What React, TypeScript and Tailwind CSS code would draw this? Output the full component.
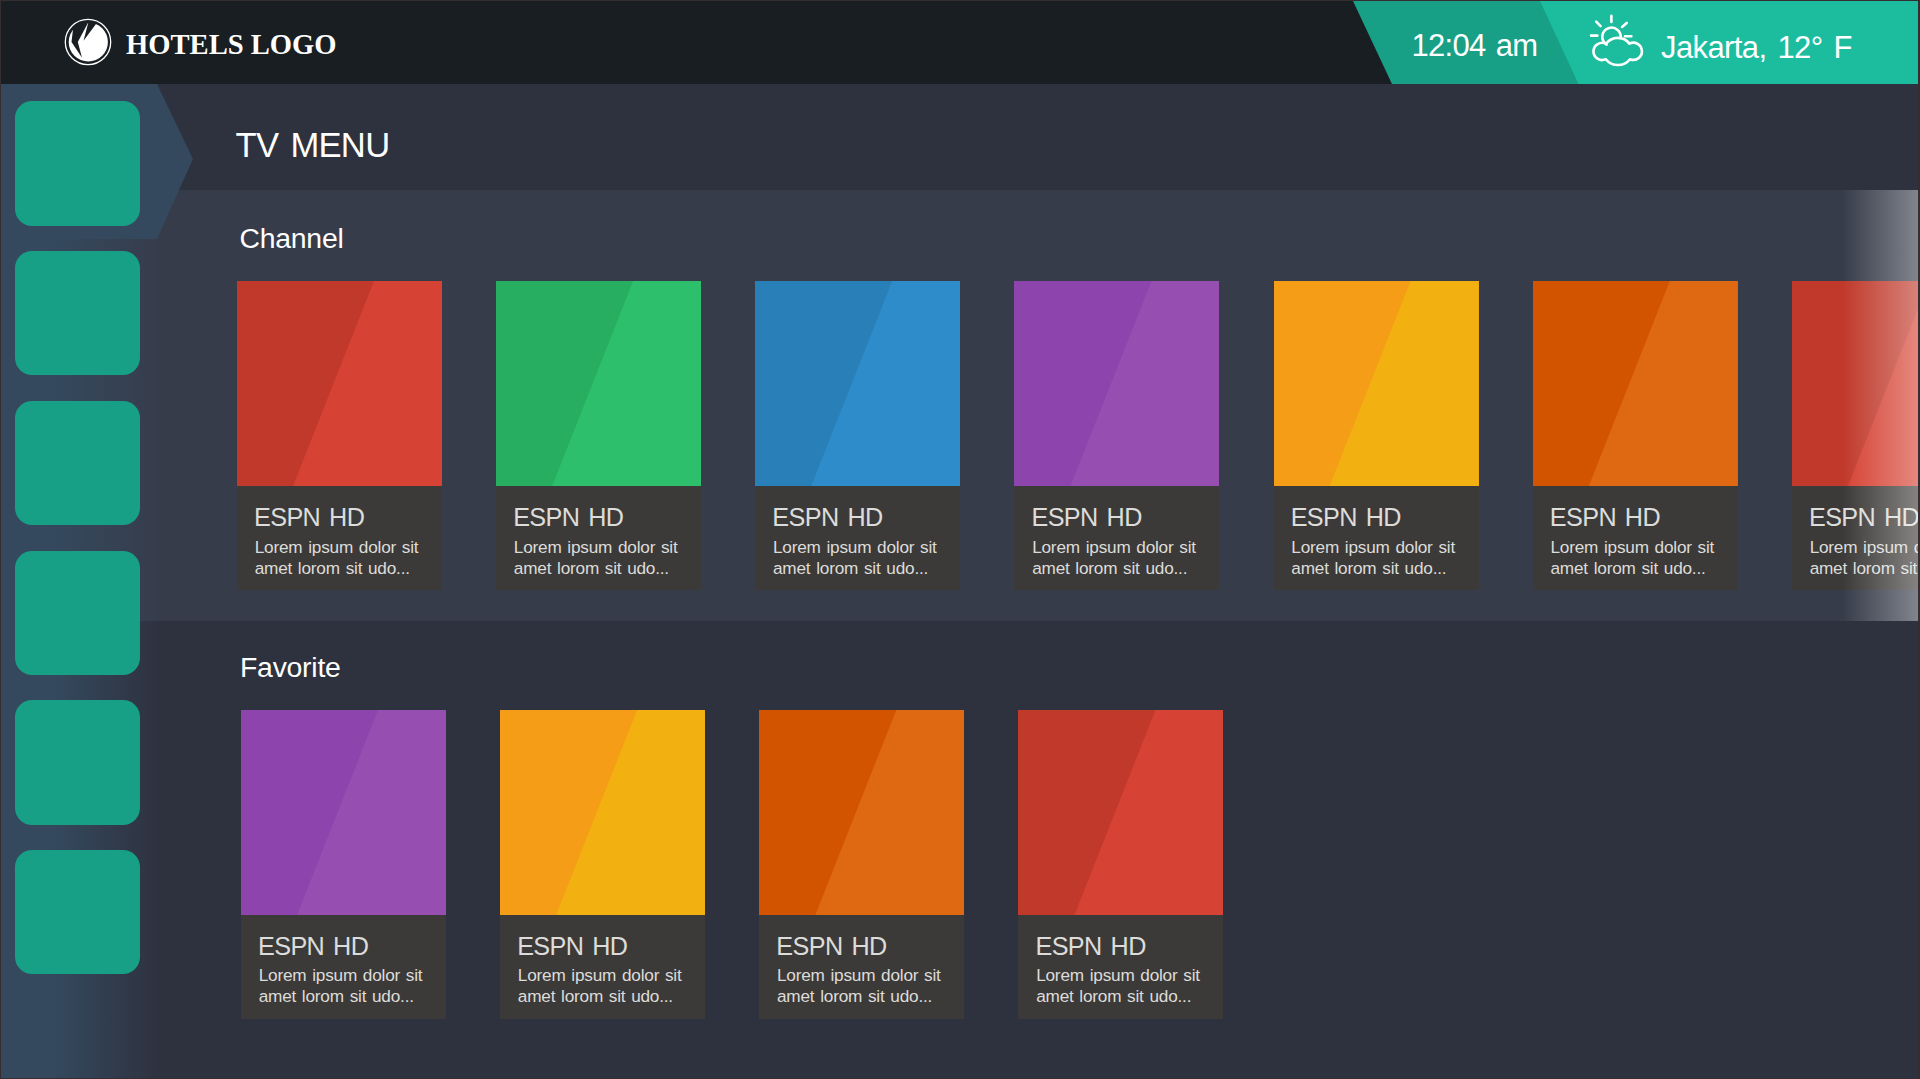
const CARD_SPLIT = '[clip-path:polygon(137px_0,100%_0,100%_100%,56px_100%)]';

type Tone = { base: string; light: string };

const tones: Record<string, Tone> = {
  red: { base: 'bg-[#c0392b]', light: 'bg-[#d64233]' },
  green: { base: 'bg-[#27ae60]', light: 'bg-[#2dbf6b]' },
  blue: { base: 'bg-[#2980b9]', light: 'bg-[#2f8ccb]' },
  purple: { base: 'bg-[#8e44ad]', light: 'bg-[#964eb1]' },
  yellow: { base: 'bg-[#f59d16]', light: 'bg-[#f2b111]' },
  orange: { base: 'bg-[#d35400]', light: 'bg-[#de6912]' },
};

const channels = ['red', 'green', 'blue', 'purple', 'yellow', 'orange', 'red'];
const favorites = ['purple', 'yellow', 'orange', 'red'];

function Card({ tone, textGap }: { tone: Tone; textGap: string }) {
  return (
    <article className="w-[205px] shrink-0 bg-[#3c3a38] text-[#dcdcda]">
      <div className={`h-[205px] ${tone.base}`}>
        <div className={`h-full ${tone.light} ${CARD_SPLIT}`} />
      </div>
      <div className="h-[104px] pl-[17px] pt-[17px]">
        <h3 className="text-[25.2px] leading-[28px] tracking-[-0.6px] whitespace-nowrap [word-spacing:2.5px]">ESPN HD</h3>
        <p
          className={`pl-[0.7px] text-[17.2px] leading-[21px] tracking-[-0.2px] whitespace-nowrap [word-spacing:1.2px] ${textGap}`}
        >
          Lorem ipsum dolor sit
          <br />
          amet lorom sit udo...
        </p>
      </div>
    </article>
  );
}

function HotelLogo() {
  return (
    <svg className="size-[48px]" viewBox="0 0 48 48">
      <circle cx="24.3" cy="24" r="19.6" fill="#fff" />
      <path
        d="M9 11.5 L12 2 L24.5 3 L24.2 4.6 L13.8 24 L18 39.8 L16.2 37 L7.5 24 Z"
        fill="#181e21"
      />
      <path d="M24 4 L34 3 L31.8 6.2 L19.5 22.7 L24.2 5 Z" fill="#181e21" />
      <circle cx="24" cy="24" r="22.7" fill="none" stroke="#fff" strokeWidth="1.3" />
    </svg>
  );
}

function WeatherIcon() {
  return (
    <svg
      className="h-[54px] w-[54px] overflow-visible"
      viewBox="0 0 54 54"
      fill="none"
      stroke="#fff"
      strokeWidth="2.6"
      strokeLinecap="round"
      strokeLinejoin="round"
    >
      <path d="M22.4 1.8v6.2M7.2 7.7l4.4 4.4M37.7 8.9l-4.7 4M2 21.6h6.4M36 22.3h6.4" />
      <path d="M15.4 28.6A9.2 9.2 0 1 1 31.6 24.2" />
      <path d="M17 29.8A8.6 8.6 0 1 0 16.8 45.2A15.5 15.5 0 0 0 41 45.2A8.6 8.6 0 1 0 40.4 29.6A14.6 14.6 0 0 0 17 29.8Z" />
      <path d="M15.4 28.6l2.2 2" />
    </svg>
  );
}

function Header() {
  return (
    <header className="flex h-[83px] shrink-0 justify-between bg-[#181e21] text-white">
      <div className="flex pl-[62.5px] pt-[17.3px]">
        <HotelLogo />
        <span className="pl-[14.5px] pt-[10px] font-['Liberation_Serif',serif] text-[28.6px] leading-[34px] font-bold whitespace-nowrap">
          HOTELS LOGO
        </span>
      </div>
      <div className="flex w-[565px] bg-[#17a086] [clip-path:polygon(0_0,100%_0,100%_100%,39px_100%)]">
        <div className="w-[187px] pl-[58.5px] pt-[27px] text-[31px] leading-[36px] tracking-[-0.7px] whitespace-nowrap [word-spacing:2.3px]">
          12:04 am
        </div>
        <div className="flex flex-1 bg-[#1cbd9f] pl-[49px] pt-[13px] [clip-path:polygon(0_0,100%_0,100%_100%,38.5px_100%)]">
          <WeatherIcon />
          <span className="pl-[18px] pt-[16px] text-[31px] leading-[36px] tracking-[-0.6px] whitespace-nowrap [word-spacing:3px]">
            Jakarta, 12° F
          </span>
        </div>
      </div>
    </header>
  );
}

function Sidebar() {
  return (
    <nav className="z-10 w-[192px] bg-linear-to-r from-[#34495e] from-[52px] to-[#34495e]/0 to-[162px] [grid-area:1/1]">
      <div className="h-[155px] bg-[#34495e] [clip-path:polygon(0_0,156px_0,100%_75px,156px_100%,0_100%)]" />
      <div className="-mt-[137.7px] flex flex-col gap-[25.6px] pl-[14.4px]">
        {Array.from({ length: 6 }, (_, i) => (
          <button key={i} aria-label={`Menu ${i + 1}`} className="h-[124.2px] w-[124.2px] rounded-[17px] bg-[#17a086] z-10" />
        ))}
      </div>
    </nav>
  );
}

export default function App() {
  return (
    <div className="flex h-[1079px] w-[1920px] flex-col overflow-hidden border border-r-2 border-[#352d30] bg-[#2e313e] font-['Liberation_Sans',Arial,sans-serif]">
      <Header />
      <div className="grid min-h-0 flex-1 grid-cols-1">
        <Sidebar />
        <main className="min-w-0 text-white [grid-area:1/1]">
          <div className="h-[106px] pl-[234.5px] pt-[41px]">
            <h1 className="text-[34.6px] leading-[40px] tracking-[-0.7px] [word-spacing:3.2px]">TV MENU</h1>
          </div>
          <section className="grid h-[431px] grid-cols-1 bg-[#373c4a]">
            <div className="min-w-0 overflow-hidden pl-[236px] pt-[31px] [grid-area:1/1]">
              <h2 className="pl-[2.5px] text-[28.4px] leading-[34px] tracking-[-0.25px]">Channel</h2>
              <div className="flex gap-[54.17px] pt-[26px]">
                {channels.map((c, i) => (
                  <Card key={i} tone={tones[c]} textGap="pt-[6px]" />
                ))}
              </div>
            </div>
            <div className="z-10 w-[76px] justify-self-end bg-linear-to-r from-white/0 to-white/37 [grid-area:1/1]" />
          </section>
          <section className="pl-[240px] pt-[29px]">
            <h2 className="-ml-px text-[28.4px] leading-[34px] tracking-[-0.25px]">Favorite</h2>
            <div className="flex gap-[54.17px] pt-[26px]">
              {favorites.map((c, i) => (
                <Card key={i} tone={tones[c]} textGap="pt-[5px]" />
              ))}
            </div>
          </section>
        </main>
      </div>
    </div>
  );
}
